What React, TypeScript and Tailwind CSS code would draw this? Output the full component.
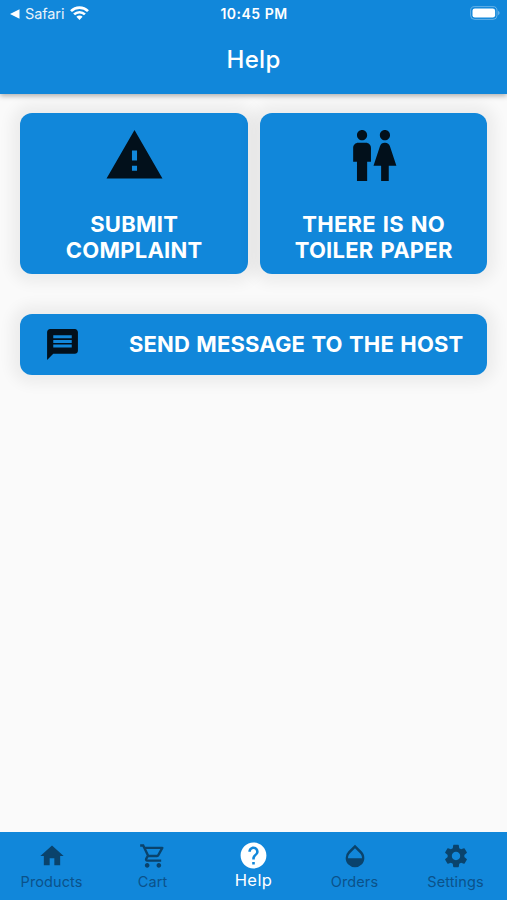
import clsx from 'clsx'
import type { IconType } from 'react-icons'
import {
    MdHelp,
    MdHome,
    MdMessage,
    MdOpacity,
    MdOutlineShoppingCart,
    MdSettings,
    MdWarning,
    MdWc,
} from 'react-icons/md'

const tabs: { label: string; icon: IconType; active?: boolean }[] = [
    { label: 'Products', icon: MdHome },
    { label: 'Cart', icon: MdOutlineShoppingCart },
    { label: 'Help', icon: MdHelp, active: true },
    { label: 'Orders', icon: MdOpacity },
    { label: 'Settings', icon: MdSettings },
]

function StatusBar() {
    return (
        <div className="grid h-[27px] grid-cols-3 items-center pr-[7px] pl-[10px]">
            <div className="flex items-center text-[14.5px] leading-none">
                <svg width="10" height="10" viewBox="0 0 10 10" fill="currentColor">
                    <path d="M0 5 9.5.2v9.6z" />
                </svg>
                <span className="mt-px ml-[5px] tracking-[-0.1px] opacity-90">Safari</span>
                <svg className="-mt-px ml-[6px]" width="19" height="14" viewBox="0 0 19 14" fill="none" stroke="currentColor" strokeWidth="2.7">
                    <path d="M1 5.1a12.2 12.2 0 0 1 17 0" />
                    <path d="M4.1 8.4a7.8 7.8 0 0 1 10.8 0" />
                    <path d="M9.5 13.9 6.4 10.8a4.4 4.4 0 0 1 6.2 0z" fill="currentColor" stroke="none" />
                </svg>
            </div>
            <span className="-ml-[2px] text-center text-[14px] leading-none font-semibold tracking-[0.5px] whitespace-nowrap">
                10:45 PM
            </span>
            <svg className="-mt-px justify-self-end" width="30" height="14" viewBox="0 0 30 14" fill="none">
                <rect x="0.6" y="0.6" width="26.4" height="12.8" rx="4" stroke="white" strokeOpacity="0.35" />
                <rect x="2.5" y="2.4" width="22.6" height="9.2" rx="2.4" fill="white" />
                <path d="M28.3 4.8v4.4c1.6-.8 1.6-3.6 0-4.4z" fill="white" fillOpacity="0.5" />
            </svg>
        </div>
    )
}

function HelpCard({ icon: Icon, lines }: { icon: IconType; lines: string[] }) {
    return (
        <button className="flex h-[161px] flex-1 flex-col items-center rounded-[12px] bg-[#1187da] pt-[12.4px] shadow-[0_0_14px_9px_rgba(0,0,0,0.055)]">
            <Icon className="size-[61px] shrink-0 text-[#02101b]" />
            <span className="mt-[24.6px] text-[22px] leading-[26px] font-bold tracking-[0.25px] [word-spacing:1.5px] text-white">
                {lines.map((line) => (
                    <span key={line} className="block">
                        {line}
                    </span>
                ))}
            </span>
        </button>
    )
}

export default function App() {
    return (
        <div className="flex h-screen flex-col overflow-hidden bg-[#fafafa] font-['Inter',sans-serif]">
            <header className="relative z-10 h-[94px] shrink-0 bg-[#1187da] text-white shadow-[0_2px_5px_rgba(0,0,0,0.3)]">
                <StatusBar />
                <h1 className="mt-[17px] text-center text-[24px] leading-[32px] font-medium tracking-[0.3px]">
                    Help
                </h1>
            </header>

            <main className="flex-1 pt-[19px] pr-[19.6px] pl-[20.4px]">
                <div className="flex gap-[12px]">
                    <HelpCard icon={MdWarning} lines={['SUBMIT', 'COMPLAINT']} />
                    <HelpCard icon={MdWc} lines={['THERE IS NO', 'TOILER PAPER']} />
                </div>
                <button className="mt-[40px] flex h-[61px] w-full items-center justify-between rounded-[12px] bg-[#1187da] pr-[24px] pl-[24px] shadow-[0_0_14px_9px_rgba(0,0,0,0.055)]">
                    <MdMessage className="size-[37px] text-[#02101b]" />
                    <span className="-mt-px text-[22px] leading-[26px] font-bold tracking-[0.15px] [word-spacing:1px] whitespace-nowrap text-white">
                        SEND MESSAGE TO THE HOST
                    </span>
                </button>
            </main>

            <nav className="grid h-[68px] shrink-0 grid-cols-5 bg-[#1187da] px-px">
                {tabs.map(({ label, icon: Icon, active }) => (
                    <button
                        key={label}
                        className={clsx(
                            'flex flex-col items-center',
                            active ? 'pt-[8px] text-white' : 'pt-[10px] text-[#0b528a]',
                        )}
                    >
                        <Icon className={active ? 'size-[31px]' : 'size-[28px] text-[#0a436c]'} />
                        <span
                            className={clsx(
                                'leading-[20px]',
                                active ? '-mt-px text-[16.5px] tracking-[0.4px]' : 'mt-[1.5px] text-[14.5px] tracking-[0.1px]',
                            )}
                        >
                            {label}
                        </span>
                    </button>
                ))}
            </nav>
        </div>
    )
}
